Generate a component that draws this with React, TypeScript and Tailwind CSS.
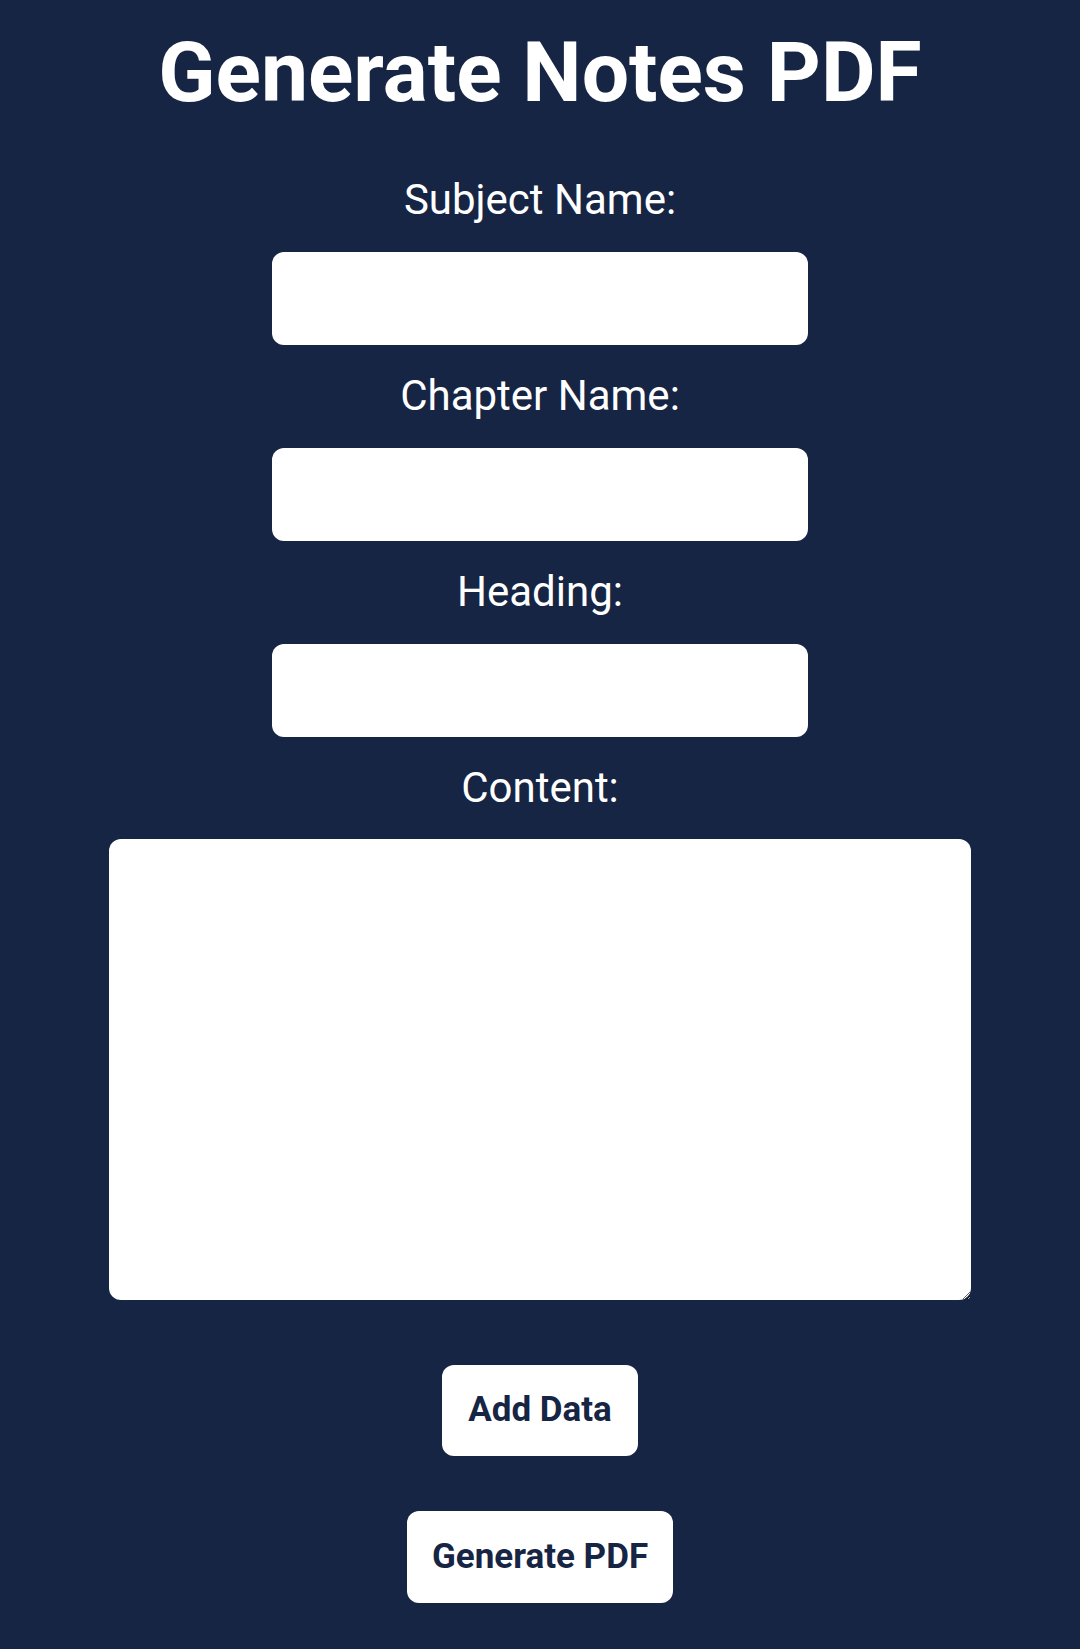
const Field = ({ label, top }: { label: string; top: string }) => {
  return (
    <>
      <label className={`${top} block text-[42px] leading-[52px] text-white`}>{label}</label>
      <input
        type="text"
        className="mt-[26px] h-[93px] w-[536px] rounded-[12px] bg-white outline-none"
      />
    </>
  );
};

const App = () => {
  return (
    <div
      className="flex min-h-[1649px] w-full flex-col items-center bg-[#162544] pt-[31px]"
      style={{ fontFamily: "Roboto, 'Noto Sans', sans-serif" }}
    >
      <h1 className="text-[84px] font-bold leading-none text-white">Generate Notes PDF</h1>

      <Field label="Subject Name:" top="mt-[59px]" />
      <Field label="Chapter Name:" top="mt-[25px]" />
      <Field label="Heading:" top="mt-[25px]" />

      <label className="mt-[25px] block text-[42px] leading-[52px] text-white">Content:</label>
      <textarea className="mt-[25px] h-[461px] w-[862px] rounded-[12px] bg-white outline-none" />

      <button className="mt-[65px] h-[91px] rounded-[12px] bg-white px-[26px] text-[35px] font-bold text-[#162544]">
        Add Data
      </button>
      <button className="mt-[55px] h-[92px] rounded-[12px] bg-white px-[25px] text-[35px] font-bold text-[#162544]">
        Generate PDF
      </button>
    </div>
  );
};

export default App;
